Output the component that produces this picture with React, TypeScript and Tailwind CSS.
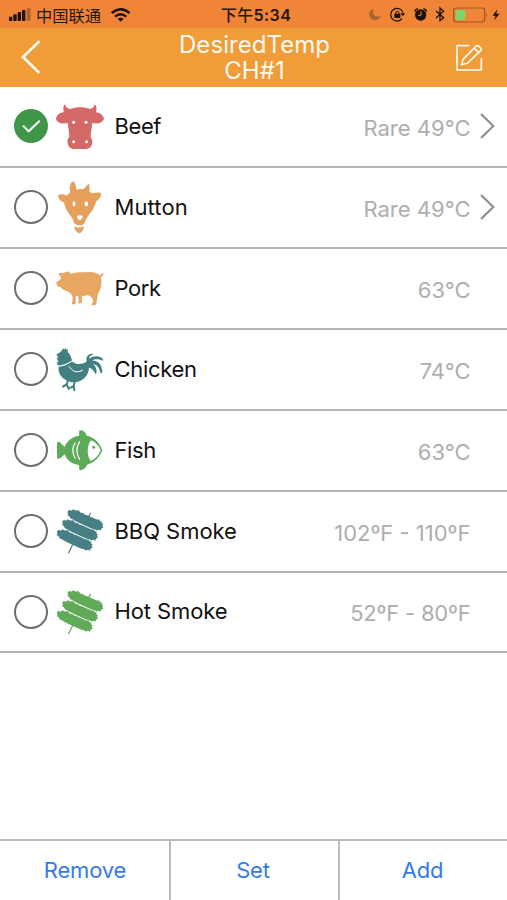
import { useState } from 'react'
import type { ReactNode } from 'react'

interface Item {
  name: string
  value: string
  icon: ReactNode
  nameClass: string
  valueClass: string
  hasOptions?: boolean
}

function BeefIcon() {
  return (
    <svg viewBox="168 27 144 162" className="h-[54px] w-12" fill="#d46a68">
      <path d="M195 43 C189 48 189 60 192 67 C181 67 171 73 168 86 C171 99 188 103 203 99 C205 115 208 129 208 141 C202 146 201 155 204 164 C207 173 214 177 222 177 L258 177 C267 177 274 172 276 163 C278 154 277 147 272 142 C272 126 276 113 277 99 C292 103 307 99 312 86 C309 74 299 68 288 67 C291 58 290 48 284 43 C283 50 279 55 270 57 C252 50 229 50 211 57 C202 56 197 51 195 43 Z" />
      <g fill="#fff">
        <circle cx="221" cy="97" r="4.5" />
        <circle cx="258" cy="97" r="4.5" />
        <circle cx="221" cy="155" r="4.5" />
        <circle cx="260" cy="155" r="4.5" />
      </g>
    </svg>
  )
}

function MuttonIcon() {
  return (
    <svg viewBox="168 30 144 162" className="h-[54px] w-12" fill="#e5a05c">
      <path d="M217 35 C209 42 207 55 211 67 C207 70 203 73 200 77 C192 72 181 71 174 76 C176 88 184 96 192 97 C195 118 208 132 216 143 C220 149 220 157 225 162 C233 167 246 167 252 162 C256 156 257 148 262 141 C273 127 284 114 288 94 C297 90 304 80 303 69 C295 66 285 68 276 70 C273 68 270 66 268 64 C270 55 269 46 266 40 C261 47 256 53 248 58 C243 56 235 57 230 60 C229 52 226 41 223 36 C221 34 219 34 217 35 Z" />
      <path d="M222 169 C230 174 244 174 252 168 C251 178 247 187 239 190 C230 188 224 180 222 169 Z" />
      <g fill="#fff">
        <ellipse cx="222" cy="101" rx="4.5" ry="7.5" />
        <ellipse cx="259" cy="101" rx="5.5" ry="7.5" />
        <path d="M231 138 Q239 133 248 138 Q248 147 239 151 Q231 147 231 138 Z" />
      </g>
    </svg>
  )
}

function PorkIcon() {
  return (
    <svg viewBox="168 33 144 162" className="h-[54px] w-12" fill="#e7a662">
      <path d="M176 70 C181 69 187 69 191 70 C193 66 200 64 209 66 L211 72 C225 66 240 66 256 67 C273 65 289 66 299 76 C303 76 304 70 309 69 L311 72 C308 75 307 79 303 82 C305 92 305 105 301 117 C298 125 293 130 293 138 C291 146 291 155 288 164 L274 166 C276 160 280 157 279 150 C277 143 271 138 263 135 C258 137 251 138 246 138 C245 146 247 155 245 160 L234 160 C237 155 237 147 234 138 L228 138 C226 146 228 155 226 163 L214 163 C218 156 218 149 217 137 C212 129 203 124 193 120 C187 118 184 114 181 111 C176 111 171 109 171 105 C169 101 168 98 170 96 C176 93 181 89 184 83 C181 78 175 74 176 70 Z" />
    </svg>
  )
}

function ChickenIcon() {
  return (
    <svg viewBox="168 20.5 144 162" className="h-[54px] w-12" fill="#427f80">
      <path d="M184 48 L189 39 L193 43 L198 38 L199 44 L204 43 L203 51 C211 56 213 66 216 76 C204 86 191 90 176 92 L170 85 L175 78 L171 71 L174 64 L169 57 L176 54 Z" />
      <path d="M176 94 C191 93 204 87 215 78 C223 84 232 88 242 86 C252 85 259 82 260 77 C257 68 263 57 276 55 L280 58 C270 61 267 66 267 71 C275 64 289 61 302 66 C307 69 310 73 310 77 C298 71 285 70 276 76 C291 75 306 85 307 111 L302 115 C299 99 291 89 278 86 C289 94 292 105 288 119 C283 109 276 99 267 98 C266 120 252 136 229 141 L214 141 C190 135 172 118 176 94 Z" />
      <g fill="none" stroke="#fff" strokeWidth="3" strokeLinecap="round">
        <path d="M178 93 Q198 91 214 79" />
        <path d="M207 94 C213 99 216 107 225 109 C234 111 241 109 248 105" />
      </g>
      <path
        d="M204 134 L200 148 L189 154 M200 148 L206 161 M224 138 L221 153 L210 158 M221 153 L223 165"
        fill="none"
        stroke="#427f80"
        strokeWidth="6"
        strokeLinecap="round"
        strokeLinejoin="round"
      />
    </svg>
  )
}

function FishIcon() {
  return (
    <svg viewBox="168 23 144 162" className="h-[54px] w-12" fill="#5cab58">
      <path d="M238 45 C247 44 257 49 260 61 C281 64 299 82 307 104 C299 127 281 143 261 148 C257 159 247 165 238 165 L237 149 C217 147 201 136 194 117 L181 129 C175 132 171 130 171 125 L171 85 C171 79 176 78 181 82 L194 95 C199 77 217 64 237 61 Z" />
      <path d="M273 75 C286 80 296 90 302 104 C296 120 286 131 272 137 C260 121 260 92 273 75 Z" fill="#fff" />
      <circle cx="281" cy="96" r="4.5" />
      <g fill="none" stroke="#fff" strokeWidth="3.8" strokeLinecap="round">
        <path d="M225 83 Q212 105 225 128" />
        <path d="M239 79 Q222 105 239 132" />
      </g>
    </svg>
  )
}

// Three pieces of meat threaded on one stick
function SkewerIcon({ color }: { color: string }) {
  const piece =
    'M202 50 L207 43 L213 46 L220 41 L226 45 L236 44 L241 51 L250 53 L254 57 L262 59 L290 72 L298 72 L300 77 L306 78 L305 83 L310 86 L307 91 L310 97 L304 99 L302 106 L296 103 L290 105 L284 101 L274 99 L230 79 L220 73 L211 68 L207 61 L201 59 L205 55 Z'
  return (
    <svg viewBox="168 25.5 144 162" className="h-[54px] w-12" fill={color}>
      <path d="M265 65 L271 53 M220 143 L206 172" stroke={color} strokeWidth="3.5" strokeLinecap="round" />
      <path d={piece} />
      <path d={piece} transform="translate(-16 30)" />
      <path d={piece} transform="translate(-32 60)" />
    </svg>
  )
}

const items: Item[] = [
  { name: 'Beef', value: 'Rare 49°C', icon: <BeefIcon />, nameClass: 'tracking-[-0.4px]', valueClass: 'tracking-normal', hasOptions: true },
  { name: 'Mutton', value: 'Rare 49°C', icon: <MuttonIcon />, nameClass: 'tracking-[0.1px]', valueClass: 'tracking-normal', hasOptions: true },
  { name: 'Pork', value: '63°C', icon: <PorkIcon />, nameClass: 'tracking-[-0.4px]', valueClass: 'tracking-normal' },
  { name: 'Chicken', value: '74°C', icon: <ChickenIcon />, nameClass: 'tracking-[-0.3px]', valueClass: 'tracking-normal' },
  { name: 'Fish', value: '63°C', icon: <FishIcon />, nameClass: 'tracking-[-0.4px]', valueClass: 'tracking-normal' },
  { name: 'BBQ Smoke', value: '102ºF - 110ºF', icon: <SkewerIcon color="#477f84" />, nameClass: 'tracking-[-0.05px]', valueClass: 'tracking-normal' },
  { name: 'Hot Smoke', value: '52ºF - 80ºF', icon: <SkewerIcon color="#60aa5a" />, nameClass: 'tracking-[-0.1px]', valueClass: 'tracking-[-0.2px]' },
]

function StatusBar() {
  return (
    <div className="grid h-7 grid-cols-[1fr_auto_1fr] items-center bg-[#f08537] text-[#24160b]">
      <div className="flex items-center pl-[9px]">
        <svg viewBox="27 20 66 44" className="h-[14.67px] w-[22px]" fill="#1c1008">
          <rect x="27" y="49" width="10" height="13" rx="2.5" />
          <rect x="40" y="42" width="10" height="20" rx="2.5" />
          <rect x="53" y="35" width="10" height="27" rx="2.5" />
          <rect x="66" y="29" width="10" height="33" rx="2.5" />
          <rect x="80" y="24" width="12" height="38" rx="2.5" opacity="0.3" />
        </svg>
        <span className="ml-[5px] font-['Noto_Sans_CJK_SC',sans-serif] text-[16.3px] leading-7">中国联通</span>
        <svg viewBox="332 22 58 42" className="ml-[10px] h-[14px] w-[19.33px]" fill="none" stroke="#1c1008" strokeWidth="7">
          <path d="M334 37 Q361 14 388 37" />
          <path d="M344 48 Q361 33 378 48" />
          <path d="M352 54 Q361 48 370 54 L361 63 Z" fill="#1c1008" stroke="none" />
        </svg>
      </div>
      <div className="ml-[5px] font-['Inter','Noto_Sans_CJK_SC',sans-serif] text-[16px] font-semibold leading-7 tracking-[0.4px]">
        <span className="font-['Noto_Sans_CJK_SC',sans-serif] font-medium">下午</span>5:34
      </div>
      <svg viewBox="27 18 396 50" className="mr-[6px] h-[16.67px] w-[132px] justify-self-end" fill="#1c1008">
        <path d="M41 27 C24 30 22 56 41 60 C51 62 60 57 63 48 C48 54 33 44 41 27 Z" fill="#a9672f" />
        <path d="M129 38 A19 19 0 1 0 126 56" fill="none" stroke="#1c1008" strokeWidth="3.5" />
        <path d="M121 40 L135 40 L129 49 Z" />
        <rect x="103" y="41" width="18" height="13" rx="1" />
        <path d="M107 42 V37 Q112 30 117 37 V42" fill="none" stroke="#1c1008" strokeWidth="3" />
        <circle cx="182" cy="45" r="17" />
        <path d="M165 33 Q166 28 172 27 M192 27 Q198 28 199 33" fill="none" stroke="#1c1008" strokeWidth="5" strokeLinecap="round" />
        <path d="M183 34 V46 H174" fill="none" stroke="#f08537" strokeWidth="3" />
        <path d="M228 33 L251 53 L240 62 V24 L251 34 L228 54" fill="none" stroke="#1c1008" strokeWidth="3.8" />
        <rect x="281" y="24" width="93" height="42" rx="8" fill="none" stroke="#985725" strokeWidth="3.5" />
        <rect x="287" y="30" width="29" height="30" rx="2" fill="#78d66d" />
        <path d="M378 39 Q384 45 378 51 Z" fill="#985725" />
        <path d="M412 28 L398 47 H407 L403 61 L419 41 H409 Z" />
      </svg>
    </div>
  )
}

function NavBar() {
  return (
    <header className="grid h-[59px] grid-cols-[1fr_auto_1fr] bg-[#f09c38] text-[#fffaf0]">
      <button className="ml-[21px] mt-[12px] h-[34px] w-5" aria-label="Back">
        <svg viewBox="63 120 60 102" className="h-[34px] w-5" fill="none" stroke="currentColor" strokeWidth="8">
          <path d="M118 124 L69 171 L118 219" />
        </svg>
      </button>
      <h1 className="ml-0.5 whitespace-pre-line pt-[4px] text-center text-[24px] leading-[25.5px] tracking-[0.05px]">
        {'DesiredTemp\nCH#1'}
      </h1>
      <button className="mr-[24px] mt-[16px] h-[28px] w-[28px] justify-self-end" aria-label="Edit">
        <svg viewBox="606 132 84 84" className="size-7" fill="none" stroke="currentColor" strokeWidth="5">
          <path d="M649 137 H612 V210 H685 V174" />
          <path d="M626 194 L630 178 L670 138 Q674 135 678 139 L683 144 Q686 148 683 152 L643 190 Z M664 145 L677 158" />
        </svg>
      </button>
    </header>
  )
}

function CheckMark({ checked }: { checked: boolean }) {
  if (!checked) return <span className="size-[34px] rounded-full border-2 border-[#6e6e6e]" />
  return (
    <span className="size-[34px] rounded-full bg-[#409648]">
      <svg viewBox="42 57 102 102" className="size-full" fill="none" stroke="#fff" strokeWidth="6">
        <path d="M69 107 L86 124 L119 92" />
      </svg>
    </span>
  )
}

export default function App() {
  const [selected, setSelected] = useState('Beef')

  return (
    <div className="flex h-[900px] w-[507px] flex-col overflow-hidden bg-white font-['Inter','Noto_Sans_CJK_SC',sans-serif]">
      <StatusBar />
      <NavBar />

      <ul className="flex-1">
        {items.map((item) => (
          <li
            key={item.name}
            onClick={() => setSelected(item.name)}
            className="flex h-[80.93px] items-center border-b-2 border-[#b5b5b5] pl-[14px] text-[22px]"
          >
            <CheckMark checked={item.name === selected} />
            <span className="ml-2">{item.icon}</span>
            <span className={`ml-[10.5px] text-[#111] ${item.nameClass}`}>{item.name}</span>
            <span className={`ml-auto pt-1 text-[#aeaeae] ${item.valueClass}`}>{item.value}</span>
            <span className="ml-[9px] w-[27.5px]">
              {item.hasOptions && (
                <svg viewBox="479 72 45 78" className="h-[26px] w-[15px]" fill="none" stroke="#8f8f8f" strokeWidth="6.5">
                  <path d="M482 75 L519 111 L482 147" />
                </svg>
              )}
            </span>
          </li>
        ))}
      </ul>

      <footer className="grid h-[61px] grid-cols-[171px_169px_167px] border-t-2 border-[#b9b9b9] text-[22px] tracking-[-0.15px] text-[#347bea]">
        <button className="border-r-2 border-[#bcbcbc] pl-px">Remove</button>
        <button className="border-r-2 border-[#bcbcbc] pr-[3px]">Set</button>
        <button className="pr-[2px]">Add</button>
      </footer>
    </div>
  )
}
